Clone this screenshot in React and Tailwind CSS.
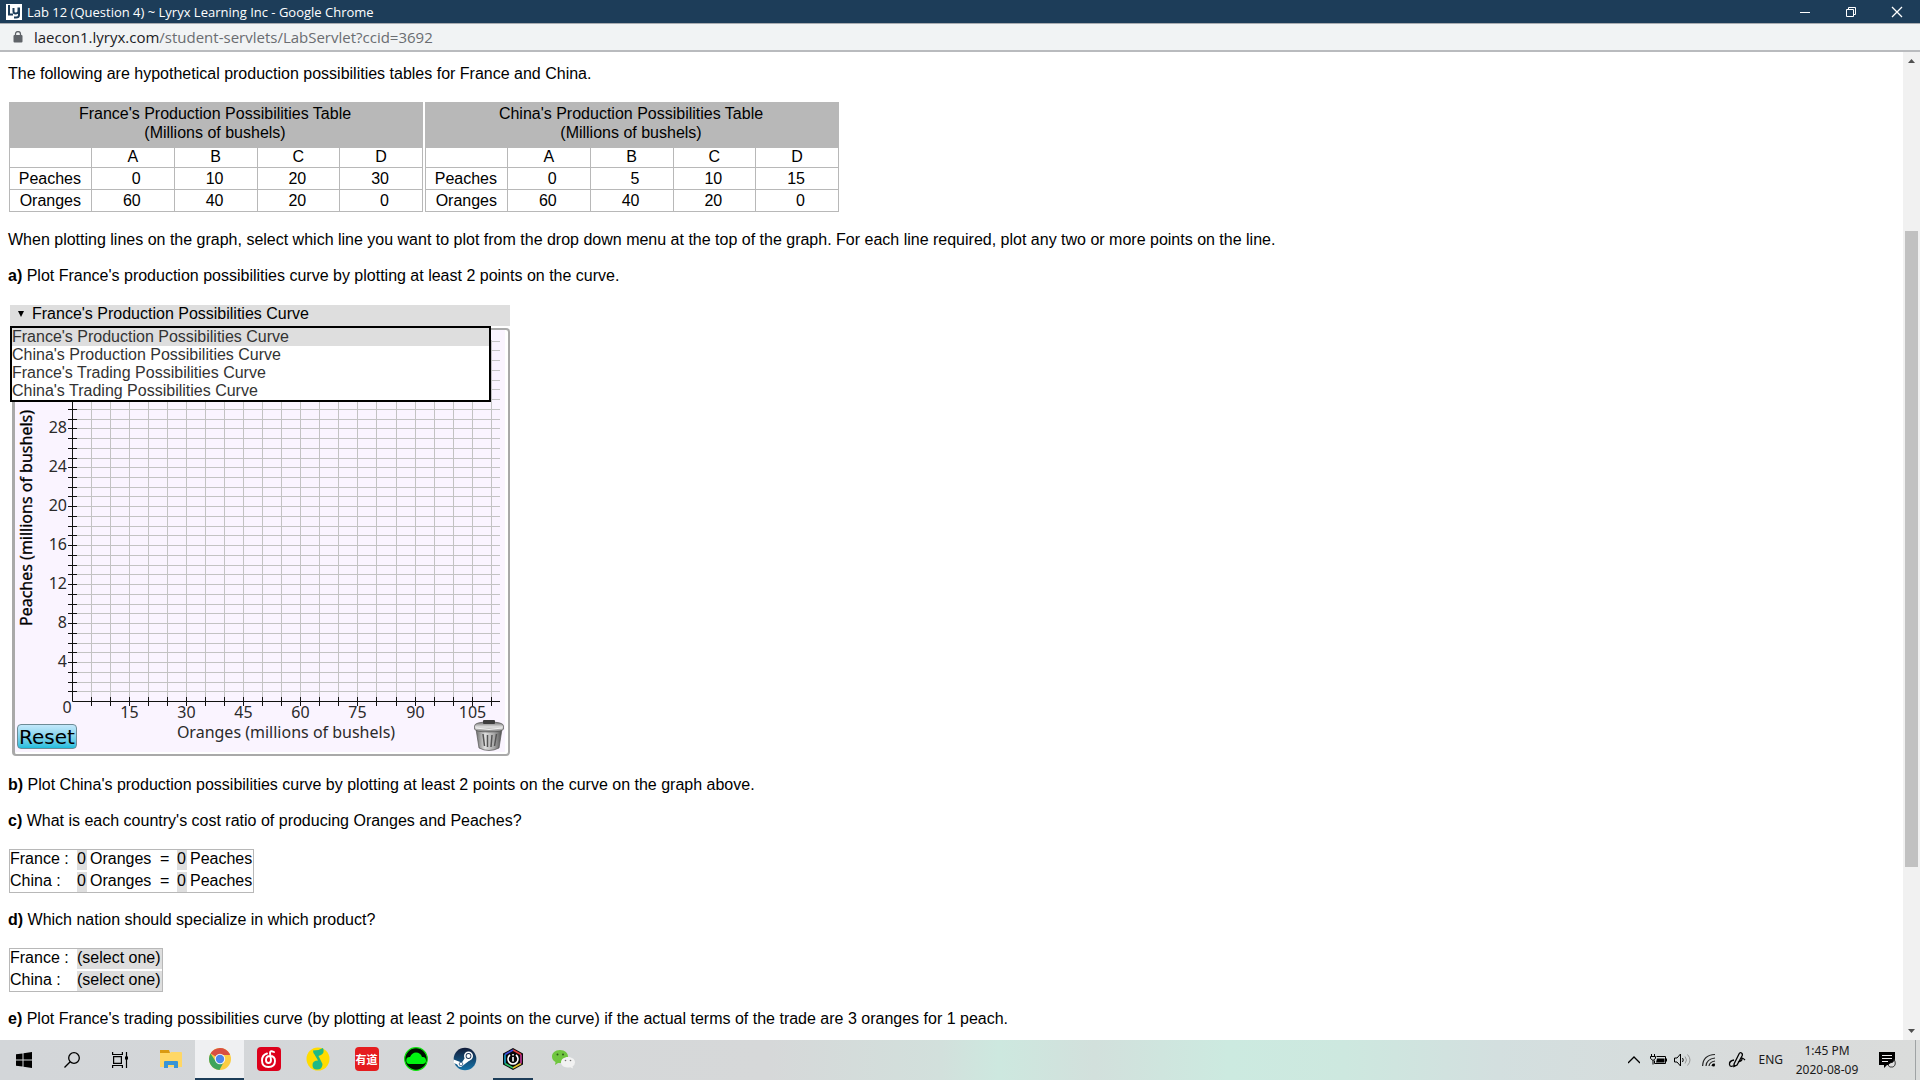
import React from "react";

const OPTIONS = [
  "France's Production Possibilities Curve",
  "China's Production Possibilities Curve",
  "France's Trading Possibilities Curve",
  "China's Trading Possibilities Curve",
];

function TitleBar() {
  return (
    <header className="flex h-6 shrink-0 items-center border-b border-[#a9acb1] bg-[#1d3d59] pl-[6px] text-white font-['Open_Sans',sans-serif]">
      <svg className="h-4 w-4 shrink-0" viewBox="0 0 16 16">
        <rect width="16" height="16" fill="#fff" />
        <path d="M3 1v9.500h4M7.500 4v3.500q0 2 2 2 2.500 0 3-2V3.500M13 3.500V11q0 2.500-3 2.500H8" fill="none" stroke="#1d3d59" strokeWidth="2" />
      </svg>
      <h1 className="ml-[5px] flex-1 truncate text-[13px] leading-5">Lab 12 (Question 4) ~ Lyryx Learning Inc - Google Chrome</h1>
      <div className="flex">
        <button aria-label="Minimize" className="flex h-5 w-[46px] items-center justify-center">
          <svg className="h-3 w-3" viewBox="0 0 12 12"><path d="M1 6.500h10" stroke="#fff" /></svg>
        </button>
        <button aria-label="Restore" className="flex h-5 w-[46px] items-center justify-center">
          <svg className="h-3 w-3" viewBox="0 0 12 12" fill="none" stroke="#fff"><path d="M1.500 3.500h7v7h-7zM3.500 3.500v-2h7v7h-2" /></svg>
        </button>
        <button aria-label="Close" className="flex h-5 w-[46px] items-center justify-center">
          <svg className="h-3 w-3" viewBox="0 0 12 12"><path d="M1 1l10 10M11 1L1 11" stroke="#fff" strokeWidth="1.300" /></svg>
        </button>
      </div>
    </header>
  );
}

function AddressBar() {
  return (
    <div className="flex h-7 shrink-0 items-center border-b-2 border-[#b9bbbe] bg-[#f1f3f4] pl-[13px] font-['Open_Sans',sans-serif]">
      <svg className="h-3 w-[10px]" viewBox="0 0 10 12">
        <rect x="0.500" y="4" width="9" height="7.500" rx="1" fill="#5f6368" />
        <path d="M2.500 4.500V3a2.500 2.500 0 0 1 5 0v1.500" fill="none" stroke="#5f6368" strokeWidth="1.300" />
      </svg>
      <p className="ml-[11px] text-[15px] leading-5 text-[#6a6d71]">
        <span className="text-[#202124]">laecon1.lyryx.com</span>/student-servlets/LabServlet?ccid=3692
      </p>
    </div>
  );
}

function ProductionTable({ country, peaches, oranges }) {
  const cell = "h-[22px] border border-[#b8b8b8] p-0";
  const num = cell + " pr-[33px] text-right";
  return (
    <table className="w-[414px] table-fixed border-collapse">
      <colgroup>
        <col className="w-[82px]" />
        <col span={4} />
      </colgroup>
      <thead>
        <tr>
          <th colSpan={5} className="h-[45px] border border-[#b8b8b8] bg-[#b8b8b8] pt-0 pr-[2px] pb-[5px] pl-0 font-normal leading-[19px]">
            {country}'s Production Possibilities Table
            <br />
            (Millions of bushels)
          </th>
        </tr>
        <tr className="leading-[18px]">
          <td className="h-5 border border-[#b8b8b8] p-0" />
          {["A", "B", "C", "D"].map((l) => (
            <th key={l} className="h-5 border border-[#b8b8b8] px-0 pt-0 pb-px font-normal">{l}</th>
          ))}
        </tr>
      </thead>
      <tbody className="leading-[18px]">
        <tr>
          <th className={cell + " pr-[10px] text-right font-normal"}>Peaches</th>
          {peaches.map((v, i) => <td key={i} className={num}>{v}</td>)}
        </tr>
        <tr>
          <th className={cell + " pr-[10px] text-right font-normal"}>Oranges</th>
          {oranges.map((v, i) => <td key={i} className={num}>{v}</td>)}
        </tr>
      </tbody>
    </table>
  );
}

const X0 = 60;
const Y0 = 373;
const gx = (i) => Math.round(X0 + i * 19.03) + 0.5;
const gy = (i) => Math.round(Y0 - i * 9.74) + 0.5;
const range = (a, b) => Array.from({ length: b - a + 1 }, (_, i) => a + i);

function Chart() {
  return (
    <svg className="block h-[424px] w-[492px]" viewBox="3 2 492 424" role="img" aria-label="Production possibilities graph">
      <rect x="3" y="2" width="490" height="422" fill="#faf4ff" />
      <g stroke="#c3c3c3">
        {range(1, 37).map((i) => <path key={i} d={`M60 ${gy(i)}H488`} />)}
        {range(1, 22).map((i) => <path key={i} d={`M${gx(i)} 12V373`} />)}
      </g>
      <g stroke="#111">
        <path d={`M${gx(0)} 12V${gy(0)}H488`} fill="none" />
        {range(1, 37).map((i) => <path key={i} d={`M56 ${gy(i)}h9`} />)}
        {range(1, 22).map((i) => <path key={i} d={`M${gx(i)} 369v9`} />)}
      </g>
      <g fontFamily="'Noto Sans', sans-serif" fontSize="16" fill="#2a2a2a">
        {[4, 8, 12, 16, 20, 24, 28].map((n) => (
          <text key={n} x="55" y={gy(n) + 4} textAnchor="end">{n}</text>
        ))}
        {[15, 30, 45, 60, 75, 90, 105].map((n) => (
          <text key={n} x={gx(n / 5)} y="390" textAnchor="middle">{n}</text>
        ))}
        <text x="55" y="385" textAnchor="middle">0</text>
        <text x="274" y="410" textAnchor="middle">Oranges (millions of bushels)</text>
        <text x="20" y="190" textAnchor="middle" transform="rotate(-90 20 190)" fill="#000" stroke="#000" strokeWidth="0.300">Peaches (millions of bushels)</text>
      </g>
      <Trash />
    </svg>
  );
}

function Trash() {
  return (
    <g>
      <defs>
        <linearGradient id="can" x1="0" x2="1">
          <stop offset="0" stopColor="#6d6d6d" />
          <stop offset="0.350" stopColor="#dedede" />
          <stop offset="0.700" stopColor="#a6a6a6" />
          <stop offset="1" stopColor="#505050" />
        </linearGradient>
        <linearGradient id="lid" x1="0" x2="0" y1="0" y2="1">
          <stop offset="0" stopColor="#707070" />
          <stop offset="0.500" stopColor="#e2e2e2" />
          <stop offset="1" stopColor="#777" />
        </linearGradient>
      </defs>
      <path d="M464 401l3 19q10 5 20 0l3-19z" fill="url(#can)" stroke="#555" strokeWidth="0.700" />
      <path d="M471 406l1.500 12M475.500 407v12M480 407l-1 12M484.500 406l-2 12" stroke="#555" strokeWidth="1.500" fill="none" />
      <path d="M462.500 398q0-4 14.500-4t14.500 4v3q-1 3-14.500 3t-14.500-3z" fill="url(#lid)" stroke="#555" strokeWidth="0.700" />
      <rect x="471" y="392" width="12" height="4" rx="1" fill="#3d3d3d" />
      <path d="M464 400q13 3 26 0" stroke="#fff" strokeWidth="0.800" fill="none" />
    </g>
  );
}

function GraphPanel() {
  return (
    <section className="ml-[2px] w-[500px]">
      <div className="relative">
        <button aria-haspopup="listbox" aria-expanded="true" className="flex h-[21px] w-full items-start bg-[#dedede] pl-2 text-left leading-[18px]">
          <svg className="mt-[6px] mr-2 h-[6px] w-[6px]" viewBox="0 0 6 6"><path d="M0 0h6L3 6z" /></svg>
          {OPTIONS[0]}
        </button>
        <ul role="listbox" aria-label="Line to plot" className="absolute top-[21px] left-0 z-10 w-[481px] border-2 border-black bg-white text-[#333]">
          {OPTIONS.map((o, i) => (
            <li key={o} role="option" aria-selected={i === 0} className={i === 0 ? "h-[18px] bg-[#dedede] leading-[18px]" : "h-[18px] leading-[18px]"}>{o}</li>
          ))}
        </ul>
      </div>
      <div className="relative mt-[2px] ml-[2px] overflow-hidden rounded-sm border-2 border-l-[3px] border-[#a9a9a9] bg-white">
        <Chart />
        <button className="absolute bottom-[5px] left-[2px] h-[25px] w-[60px] rounded-sm border border-[#6d8b96] bg-linear-to-b from-[#c3e8fb] to-[#16bedd] text-center font-['DejaVu_Sans',sans-serif] text-xl leading-6">Reset</button>
      </div>
    </section>
  );
}

function Blank({ label }) {
  return <input aria-label={label} defaultValue="0" className="h-5 w-[10px] bg-[#dedede] p-0 pb-[2px] text-left" />;
}

function CostRatio() {
  return (
    <div className="ml-px w-[245px] border border-[#b8b8b8]">
      {["France", "China"].map((c) => (
        <div key={c} className="flex h-[21px] items-start leading-[18px] last:h-5 odd:mb-px">
          <span className="w-[67px]">{c} :</span>
          <Blank label={c + " oranges"} />
          <span className="ml-[3px] w-[62px]">Oranges</span>
          <span className="ml-2 w-[17px]">=</span>
          <Blank label={c + " peaches"} />
          <span className="ml-[3px]">Peaches</span>
        </div>
      ))}
    </div>
  );
}

function Specialize() {
  return (
    <div className="ml-px w-[154px] border border-[#b8b8b8]">
      {["France", "China"].map((c) => (
        <label key={c} className="flex h-[21px] items-start leading-[18px] last:h-5 odd:mb-px">
          <span className="w-[67px]">{c} :</span>
          <select className="h-5 flex-1 appearance-none bg-[#dedede] p-0 pb-[2px] leading-[18px]">
            <option>(select one)</option>
            <option>Oranges</option>
            <option>Peaches</option>
          </select>
        </label>
      ))}
    </div>
  );
}

function Scrollbar() {
  return (
    <div className="flex w-[17px] shrink-0 flex-col items-center bg-[#f1f1f1]" aria-hidden="true">
      <svg className="mt-[7px] h-1 w-[7px] shrink-0" viewBox="0 0 7 4"><path d="M0 4h7L3.500 0z" fill="#505050" /></svg>
      <div className="flex-[168]" />
      <div className="w-[13px] flex-[635] bg-[#c1c1c1]" />
      <div className="flex-[162]" />
      <svg className="mb-[7px] h-1 w-[7px] shrink-0" viewBox="0 0 7 4"><path d="M0 0h7L3.500 4z" fill="#505050" /></svg>
    </div>
  );
}

function TaskButton({ label, state = "", children }) {
  return (
    <button aria-label={label} className={"flex h-10 w-[49px] items-center justify-center border-b-2 " + (state === "active" ? "border-[#1d3d59] bg-[#eff0f2]" : state === "open" ? "border-[#1d3d59]" : "border-transparent")}>
      {children}
    </button>
  );
}

function Taskbar() {
  const box = "h-6 w-6";
  return (
    <footer className="flex h-10 shrink-0 items-center bg-[linear-gradient(to_right,#d3d6d9_0%,#d6d8d9_40%,#d2e0dc_49%,#cde8df_52%,#d2e0dc_57%,#cceae0_64%,#cde8df_70%,#d3dfdf_78%,#d9dbdb_92%,#dadcdb_100%)] font-['Noto_Sans',sans-serif] text-[#1a1a1a]">
      <button aria-label="Start" className="flex h-10 w-12 items-center justify-center">
        <svg className="h-4 w-4" viewBox="0 0 16 16"><path d="M0 2.300l6.500-.9v6.100H0zM7.500 1.200L16 0v7.500H7.500zM0 8.500h6.500v6.100L0 13.700zM7.500 8.500H16V16l-8.500-1.200z" /></svg>
      </button>
      <button aria-label="Search" className="flex h-10 w-12 items-center justify-center">
        <svg className="h-4 w-4" viewBox="0 0 16 16" fill="none" stroke="#000" strokeWidth="1.300"><circle cx="10" cy="6" r="5.300" /><path d="M6.200 9.800L.5 15.500" /></svg>
      </button>
      <button aria-label="Task view" className="flex h-10 w-[50px] items-center pl-4">
        <svg className="h-4 w-4" viewBox="0 0 16 16" fill="none" stroke="#000" strokeWidth="1.200"><path d="M.6 0v2.500h9.800V0M.6 16v-2.500h9.800V16M1.600 4.600h7.800v6.800H1.600zM14.500 0v16" /><path d="M13 4.500h3v3h-3z" fill="#000" stroke="none" /></svg>
      </button>
      <TaskButton label="File Explorer">
        <svg className="h-[18px] w-[22px]" viewBox="0 0 22 18"><path d="M0 0h9l1 3H0z" fill="#d99a11" /><path d="M0 3h10l1-1h10q1 0 1 1v14H0z" fill="#ffd765" /><path d="M4 18v-6q0-1 1-1h12q1 0 1 1v6h-4v-3H8v3z" fill="#3a94d6" /></svg>
      </TaskButton>
      <TaskButton label="Google Chrome" state="active">
        <svg className={box} viewBox="0 0 24 24"><circle cx="12" cy="12" r="11" fill="#fccd43" /><path d="M12 12L2.500 6.500a11 11 0 0 1 19-.1L22 8H12z" fill="#d94f43" /><path d="M2.500 6.500a11 11 0 0 0 9 16.500l4.500-8.500-8.500-.5z" fill="#3fa45b" /><circle cx="12" cy="12" r="5.200" fill="#f4f4f4" /><circle cx="12" cy="12" r="4.200" fill="#4d86ec" /></svg>
      </TaskButton>
      <TaskButton label="NetEase Music">
        <svg className={box} viewBox="0 0 24 24"><rect width="24" height="24" rx="4" fill="#dd001b" /><path d="M17 5q-4-2-4 1l1 7q0 3-2.500 3T9 13q0-4 4-4 5 0 5 5 0 6-6.500 6Q5 20 5 13.500 5 8 10 6.500" fill="none" stroke="#fff" strokeWidth="1.900" strokeLinecap="round" /></svg>
      </TaskButton>
      <TaskButton label="QQ Music">
        <svg className={box} viewBox="0 0 24 24"><circle cx="12" cy="12" r="11.500" fill="#ffdc00" /><path d="M7 3.500q6 0 10-2.500 2 5-2 7l-2.500 1 4 8q0 5.500-5.500 5.500-4.500 0-4.500-4.500t5.500-4.500L8.500 7.500Q7 6 7 3.500z" fill="#1fb985" /></svg>
      </TaskButton>
      <TaskButton label="Youdao">
        <span className="flex h-6 w-6 items-center justify-center rounded bg-[#e51c1e] font-['Noto_Sans_CJK_SC',sans-serif] text-[11px] leading-6 font-bold text-white">有道</span>
      </TaskButton>
      <TaskButton label="Cloud">
        <svg className={box} viewBox="0 0 24 24"><circle cx="12" cy="12" r="11.300" fill="#001000" stroke="#0be60b" strokeWidth="1.200" /><path d="M5.500 17a3.500 3.500 0 0 1 .5-7q2-4.500 6-4.500 4.500 0 6 4.500a3.500 3.500 0 0 1 1 7z" fill="#00f510" /></svg>
      </TaskButton>
      <TaskButton label="Steam">
        <svg className={box} viewBox="0 0 24 24"><defs><linearGradient id="steam" x1="0" y1="0" x2="0" y2="1"><stop offset="0" stopColor="#111b38" /><stop offset="1" stopColor="#1674aa" /></linearGradient></defs><circle cx="12" cy="12" r="11.300" fill="url(#steam)" /><path d="M.7 12.500l6.500 2.500 2 0 3-4.500 5 2.500-6 4.500-3 2.500q-3 .5-4-2.500l-3.300-1.500z" fill="#fff" /><circle cx="15.500" cy="9" r="3.700" fill="#1b3457" stroke="#fff" strokeWidth="1.600" /><circle cx="15.500" cy="9" r="2" fill="#fff" /><circle cx="8" cy="17" r="1.800" fill="none" stroke="#27517a" strokeWidth="0.800" /></svg>
      </TaskButton>
      <button aria-label="iCUE" className="ml-1 flex h-10 w-10 items-center justify-center border-b-2 border-[#1d3d59]">
        <svg className={box} viewBox="0 0 24 24"><path d="M12 1l10 5.500v11L12 23 2 17.500v-11z" fill="#080808" /><path d="M12 3l8 4.500" stroke="#e33b38" strokeWidth="1.500" /><path d="M4 7.500L12 3" stroke="#3f4be0" strokeWidth="1.500" /><path d="M4 7.500v9" stroke="#17a5d7" strokeWidth="1.500" /><path d="M4 16.500l8 4.500" stroke="#28c56b" strokeWidth="1.500" /><path d="M12 21l8-4.500" stroke="#e4c32b" strokeWidth="1.500" /><path d="M20 7.500v9" stroke="#d13b9e" strokeWidth="1.500" /><circle cx="12" cy="12" r="6.500" fill="#080808" /><path d="M9 8a5 5 0 1 0 6 0M12 7v1.500M12 10v4.500" stroke="#fff" strokeWidth="1.600" fill="none" /></svg>
      </button>
      <div className="ml-[5px] flex">
        <TaskButton label="WeChat">
          <svg className={box} viewBox="0 0 24 24"><path d="M9 3c5 0 8 3 8 6.500S14 16 9 16l-2 0-3 2 .5-3Q1 13 1 9.500C1 6 4 3 9 3z" fill="#70c63f" /><circle cx="6.500" cy="7.500" r="1" fill="#31591c" /><circle cx="12" cy="7.500" r="1" fill="#31591c" /><path d="M17 10c4 0 7 2.300 7 5.300q0 2.700-2.500 4.200l.5 2-2.500-1.300C13 21.500 10 18.500 10 15.300 10 12.300 13 10 17 10z" fill="#f2f2f2" /><circle cx="14.500" cy="13.500" r=".8" fill="#777" /><circle cx="19.500" cy="13.500" r=".8" fill="#777" /></svg>
        </TaskButton>
      </div>
      <div className="ml-auto flex h-10 items-center">
        <svg className="h-3 w-3" viewBox="0 0 12 12"><path d="M0 9l6-6 6 6" fill="none" stroke="#000" strokeWidth="1.300" /></svg>
        <svg className="ml-[10px] h-[14px] w-[17px]" viewBox="0 0 17 14" fill="none" stroke="#000"><path d="M1.500 1v2.500M4.500 1v2.500M.5 3.500h5v2L3 7.500.5 5.500zM3 7.500v4M6.500 3.500h9v7H4.500v-3M16.500 5.500v3" /><path d="M7 5.500h7.500v4H6z" fill="#000" stroke="none" /></svg>
        <svg className="ml-[7px] h-[14px] w-[17px]" viewBox="0 0 17 14" fill="none" stroke="#000"><path d="M.5 5h2.500l3.500-4v12L3 9H.5zM8.500 5q1.500 2 0 4" /><path d="M11 3.500q3 3.500 0 7M13.500 1.500q5 5.500 0 11" stroke="#999" /></svg>
        <svg className="ml-[11px] h-[14px] w-[14px]" viewBox="0 0 14 14" fill="none" stroke="#222" strokeWidth="1.200"><path d="M.6 13Q1 2 13 1.500M4 13q.5-7 9-8M7 13q.5-4 6-5M10 13q0-1.500 3-2" /><circle cx="11.500" cy="12" r="1.500" fill="#000" stroke="none" /></svg>
        <svg className="ml-3 h-[18px] w-[18px]" viewBox="0 0 18 18" fill="none" stroke="#000" strokeWidth="1.300"><path d="M6 13L11 3q1-2 2.500-1T14 5L9 14l-3 1.500zM6 9q-5 1-4.500 4.500T7 14M10 11q4-1 4-3t3 1" /></svg>
        <span className="ml-3 text-xs leading-4">ENG</span>
        <p className="ml-[10px] w-[68px] text-center text-xs leading-[19px]">1:45 PM<br />2020-08-09</p>
        <svg className="ml-[18px] h-4 w-[17px]" viewBox="0 0 17 16"><path d="M0 0h16v13H8l-3 3v-3H0z" /><path d="M3 3.500h10M3 6.500h10M3 9.500h6" stroke="#eee" strokeWidth="1.200" /><path d="M11 11q4 0 4-4 3 6-1 8-4 1-5-2z" fill="#ddd" stroke="#111" strokeWidth=".8" /></svg>
        <span className="ml-[19px] h-10 w-[5px] border-l border-[#9fa3a4]" />
      </div>
    </footer>
  );
}

export default function App() {
  return (
    <div className="flex h-screen flex-col overflow-hidden bg-white text-base text-black font-['Liberation_Sans',Arial,sans-serif]">
      <TitleBar />
      <AddressBar />
      <div className="flex min-h-0 flex-1">
        <main className="min-w-0 flex-1 overflow-hidden pt-[13px] pl-2 leading-[18px]">
          <p>The following are hypothetical production possibilities tables for France and China.</p>
          <div className="mt-[19px] ml-px flex gap-[2px]">
            <ProductionTable country="France" peaches={[0, 10, 20, 30]} oranges={[60, 40, 20, 0]} />
            <ProductionTable country="China" peaches={[0, 5, 10, 15]} oranges={[60, 40, 20, 0]} />
          </div>
          <p className="mt-[19px]">When plotting lines on the graph, select which line you want to plot from the drop down menu at the top of the graph. For each line required, plot any two or more points on the line.</p>
          <p className="mt-[18px] mb-5"><b>a)</b> Plot France's production possibilities curve by plotting at least 2 points on the curve.</p>
          <GraphPanel />
          <p className="mt-5"><b>b)</b> Plot China's production possibilities curve by plotting at least 2 points on the curve on the graph above.</p>
          <p className="mt-[18px] mb-[19px]"><b>c)</b> What is each country's cost ratio of producing Oranges and Peaches?</p>
          <CostRatio />
          <p className="mt-[18px] mb-[19px]"><b>d)</b> Which nation should specialize in which product?</p>
          <Specialize />
          <p className="mt-[18px]"><b>e)</b> Plot France's trading possibilities curve (by plotting at least 2 points on the curve) if the actual terms of the trade are 3 oranges for 1 peach.</p>
        </main>
        <Scrollbar />
      </div>
      <Taskbar />
    </div>
  );
}
